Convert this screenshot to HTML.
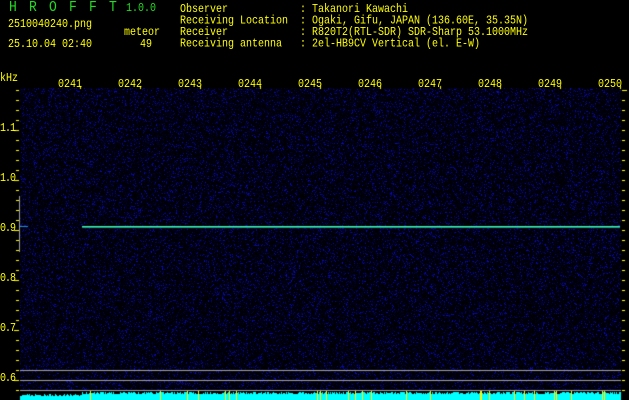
<!DOCTYPE html>
<html><head><meta charset="utf-8"><style>
html,body{margin:0;padding:0;background:#000;width:629px;height:400px;overflow:hidden;position:relative}
.t{position:absolute;font-family:"Liberation Mono",monospace;font-size:10px;color:#ffff00;white-space:pre;line-height:10px;transform-origin:0 0;transform:scaleY(1.15)}
.g{color:#22dd22}
canvas{position:absolute;left:0;top:0}
</style></head><body>
<canvas id="c" width="629" height="400"></canvas>
<div class="t g" style="left:9px;top:2px;font-size:13px;letter-spacing:2.2px">H R O F F T</div>
<div class="t g" style="left:126px;top:4px">1.0.0</div>
<div class="t" style="left:8px;top:20px">2510040240.png</div>
<div class="t" style="left:124px;top:28px">meteor</div>
<div class="t" style="left:8px;top:40px">25.10.04 02:40</div>
<div class="t" style="left:140px;top:40px">49</div>
<div class="t" style="left:180px;top:5px">Observer            : Takanori Kawachi
Receiving Location  : Ogaki, Gifu, JAPAN (136.60E, 35.35N)
Receiver            : R820T2(RTL-SDR) SDR-Sharp 53.1000MHz
Receiving antenna   : 2el-HB9CV Vertical (el. E-W)</div>
<div class="t" style="left:0px;top:74px">kHz</div>
<div class="t" style="left:58px;top:80px">0241</div>
<div class="t" style="left:118px;top:80px">0242</div>
<div class="t" style="left:178px;top:80px">0243</div>
<div class="t" style="left:238px;top:80px">0244</div>
<div class="t" style="left:298px;top:80px">0245</div>
<div class="t" style="left:358px;top:80px">0246</div>
<div class="t" style="left:418px;top:80px">0247</div>
<div class="t" style="left:478px;top:80px">0248</div>
<div class="t" style="left:538px;top:80px">0249</div>
<div class="t" style="left:598px;top:80px">0250</div>
<div class="t" style="left:0px;top:124px;letter-spacing:-1px">1.1</div>
<div class="t" style="left:0px;top:174px;letter-spacing:-1px">1.0</div>
<div class="t" style="left:0px;top:224px;letter-spacing:-1px">0.9</div>
<div class="t" style="left:0px;top:274px;letter-spacing:-1px">0.8</div>
<div class="t" style="left:0px;top:324px;letter-spacing:-1px">0.7</div>
<div class="t" style="left:0px;top:374px;letter-spacing:-1px">0.6</div>
<script>
var c=document.getElementById('c').getContext('2d');
var s=2463534242;function r(){s^=s<<13;s>>>=0;s^=s>>>17;s^=s<<5;s>>>=0;return s/4294967296;}
var X0=20,X1=621,Y0=88,Y1=400;
var img=c.createImageData(629,400),d=img.data;
for(var y=Y0;y<Y1;y++)for(var x=X0;x<X1;x++){var i=(y*629+x)*4;var v=r();var b;
if(v<0.12)b=Math.floor(60+r()*150);else if(v<0.35)b=Math.floor(20+r()*30);else b=Math.floor(r()*12);
d[i]=Math.floor(b*0.06);d[i+1]=Math.floor(b*0.06);d[i+2]=b;d[i+3]=255;}
c.putImageData(img,0,0);
c.fillStyle='#40ff60';c.fillRect(82,226,538,1);
c.fillStyle='#1890d0';c.fillRect(82,227,538,1);c.fillRect(20,226,8,1);
c.fillStyle='#a0a0a0';[370,380,390].forEach(function(y){c.fillRect(20,y,601,1);});
c.fillRect(19,196,1,56);
c.fillStyle='#000';c.fillRect(20,391,601,9);
for(var x=X0;x<X1;x++){var h=(x<82?4:6)+Math.floor(r()*3);c.fillStyle='#00ffff';c.fillRect(x,400-h,1,h);
if(x>82&&r()<0.06){c.fillStyle='#ffff00';c.fillRect(x,391,1,9);}}
c.fillStyle='#ffff00';
for(var k=0;k<10;k++)c.fillRect(80+60*k,86,1,3);
for(var y=90;y<400;y+=10){var big=((y-80)%50==0);c.fillRect(big?14:16,y,big?5:3,1);c.fillRect(622,y,3,1);}
c.fillRect(622,90,5,1);
</script>
</body></html>
